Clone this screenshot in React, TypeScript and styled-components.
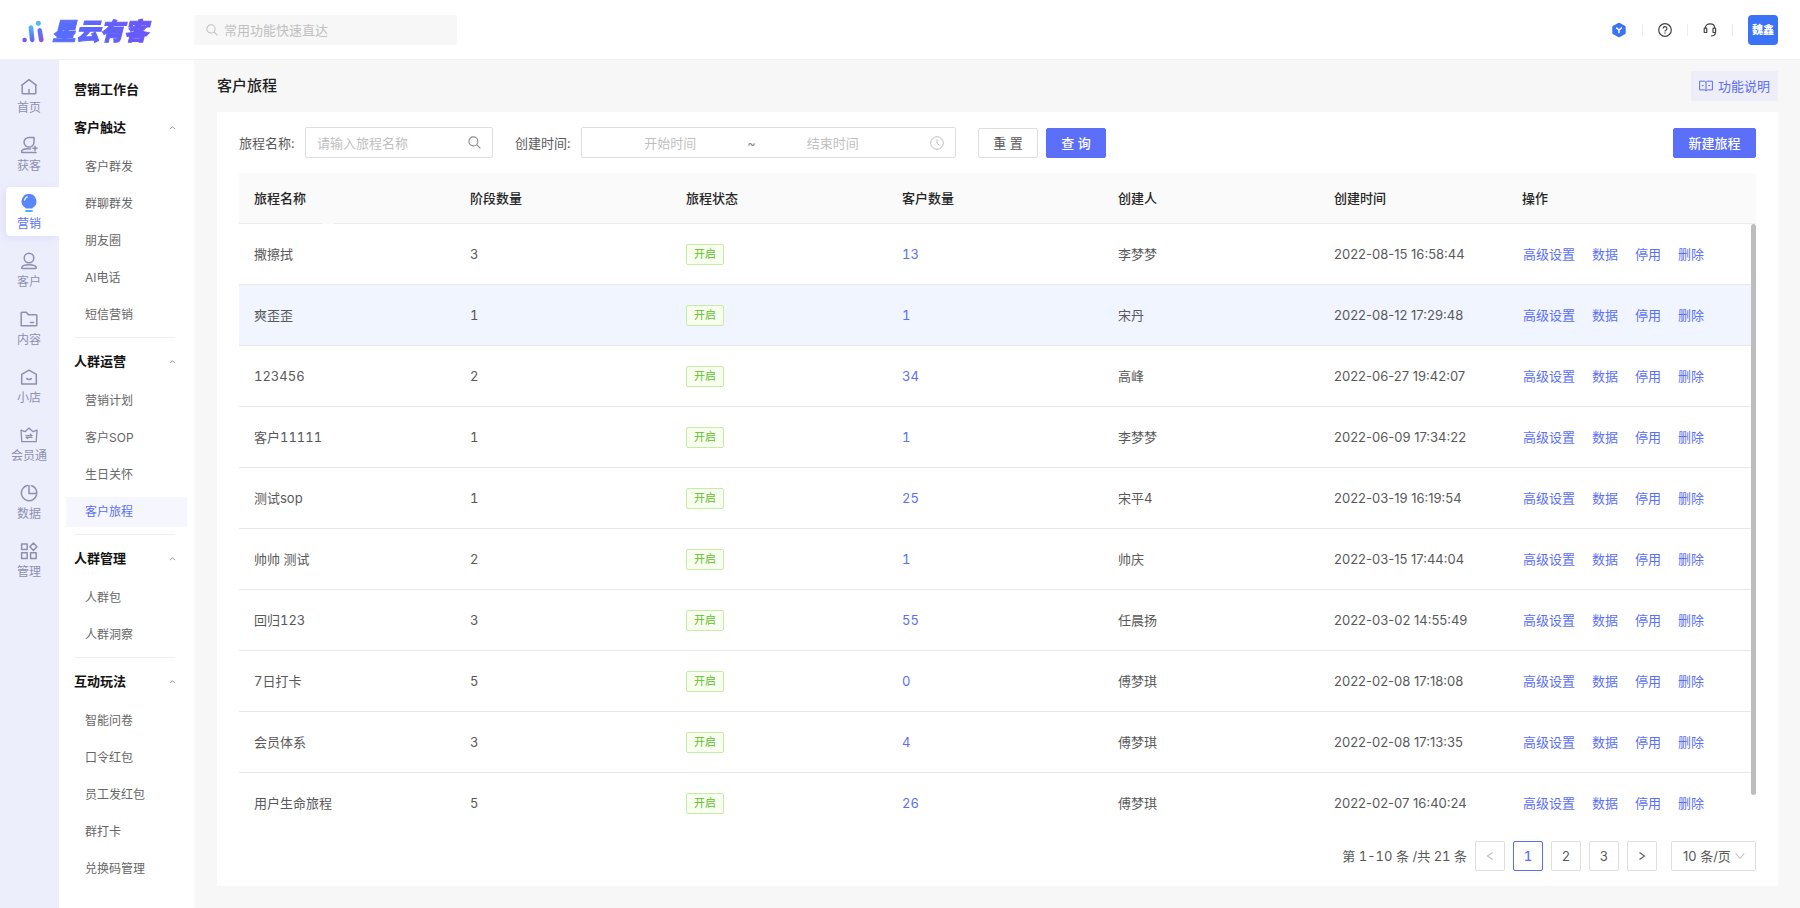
import React from 'react';
import styled, { createGlobalStyle } from 'styled-components';

const GlobalStyle = createGlobalStyle`
  *, *::before, *::after { box-sizing: border-box; }
  body {
    margin: 0;
    background: #f7f7f7;
    color: #595959;
    font: 13px/20px Inter, "Noto Sans CJK SC", sans-serif;
    font-feature-settings: "tnum";
  }
  button, input, select { font: inherit; color: inherit; margin: 0; }
  button { cursor: pointer; }
  a { color: inherit; text-decoration: none; }
  ul { list-style: none; margin: 0; padding: 0; }
  h1, h2 { margin: 0; }
  svg { display: block; flex: none; }
`;

const BRAND = '#5b6ff8';

/* ---------- shell ---------- */

const Page = styled.div`
  display: flex;
  flex-direction: column;
  min-height: 100vh;
`;

const Header = styled.header`
  display: flex;
  align-items: center;
  height: 60px;
  padding-right: 22px;
  background: #fff;
  border-bottom: 1px solid #f2f2f2;
`;

const Brand = styled.a`
  display: flex;
  align-items: center;
  gap: 7px;
  width: 194px;
  padding: 4px 0 0 21px;
`;

const BrandName = styled.span`
  padding-right: 4px;
  font-size: 24px;
  line-height: 32px;
  font-weight: 900;
  font-style: italic;
  color: transparent;
  -webkit-text-stroke: 1px transparent;
  background: linear-gradient(90deg, #5570ff, #6a55f8);
  background-clip: text;
`;

const QuickSearch = styled.label`
  display: flex;
  align-items: center;
  gap: 6px;
  width: 263px;
  height: 30px;
  padding: 0 12px;
  border-radius: 2px;
  background: #f7f7f7;
  color: #bfbfbf;
`;

const BareInput = styled.input<{ $center?: boolean }>`
  flex: 1;
  min-width: 0;
  padding: 0;
  border: 0;
  outline: 0;
  background: transparent;
  text-align: ${(p) => (p.$center ? 'center' : 'left')};
  &::placeholder { color: #bfbfbf; opacity: 1; }
`;

const HeaderTools = styled.div`
  display: flex;
  align-items: center;
  gap: 15px;
  margin-left: auto;
`;

const ToolButton = styled.button`
  display: flex;
  padding: 0;
  border: 0;
  background: none;
  color: #434343;
`;

const ToolDivider = styled.span`
  width: 1px;
  height: 12px;
  background: #ececec;
`;

const Avatar = styled.button`
  width: 30px;
  height: 30px;
  padding: 0;
  border: 0;
  border-radius: 4px;
  background: #3b72f6;
  color: #fff;
  font-size: 11px;
  font-weight: 900;
`;

const Body = styled.div`
  display: flex;
  flex: 1;
`;

/* ---------- icon rail ---------- */

const Rail = styled.nav`
  display: flex;
  flex-direction: column;
  gap: 9px;
  width: 59px;
  padding: 11px 0 0 6px;
  background: #edeefc;
`;

const RailItem = styled.a<{ $active?: boolean }>`
  display: flex;
  flex-direction: column;
  align-items: center;
  gap: 4px;
  height: 49px;
  padding: 7px 7px 0 0;
  border-radius: 4px 0 0 4px;
  font-size: 12px;
  line-height: 16px;
  white-space: nowrap;
  color: ${(p) => (p.$active ? BRAND : '#8d8fb0')};
  background: ${(p) => (p.$active ? '#fff' : 'transparent')};
  box-shadow: ${(p) => (p.$active ? '-2px 2px 8px rgba(91, 111, 248, 0.12)' : 'none')};
`;

/* ---------- sub menu ---------- */

const Menu = styled.nav`
  width: 135px;
  padding: 14px 7px 22px;
  background: #fff;
`;

const MenuHome = styled.a`
  display: block;
  margin-bottom: 8px;
  padding-left: 8px;
  line-height: 30px;
  font-weight: 700;
  color: #141414;
`;

const MenuGroup = styled.section`
  & + &::before {
    content: "";
    display: block;
    height: 1px;
    margin: 7px 12px 8px 8px;
    background: #f0f0f0;
  }
`;

const MenuHeading = styled.button`
  display: flex;
  align-items: center;
  justify-content: space-between;
  width: 100%;
  height: 30px;
  margin-bottom: 10px;
  padding: 0 10px 0 8px;
  border: 0;
  background: none;
  font-weight: 700;
  color: #141414;
  & > svg { color: #999; }
`;

const MenuList = styled.ul`
  display: flex;
  flex-direction: column;
  gap: 7px;
`;

const MenuLink = styled.a<{ $active?: boolean }>`
  display: block;
  padding-left: 19px;
  border-radius: 2px;
  font-size: 12px;
  line-height: 30px;
  color: ${(p) => (p.$active ? BRAND : '#666')};
  background: ${(p) => (p.$active ? '#f5f6fe' : 'transparent')};
`;

/* ---------- content ---------- */

const Content = styled.main`
  display: flex;
  flex: 1;
  flex-direction: column;
  min-width: 0;
  padding: 11px 22px 22px 23px;
`;

const TitleBar = styled.div`
  display: flex;
  align-items: center;
  justify-content: space-between;
  margin-bottom: 11px;
`;

const Title = styled.h1`
  font-size: 15px;
  line-height: 30px;
  font-weight: 500;
  color: #1f1f1f;
`;

const GuideLink = styled.a`
  display: flex;
  align-items: center;
  gap: 5px;
  height: 30px;
  padding: 0 8px;
  background: #eeeef8;
  color: ${BRAND};
`;

const Card = styled.section`
  flex: 1;
  padding: 15px 22px;
  background: #fff;
`;

const Filters = styled.form`
  display: flex;
  align-items: center;
  margin-bottom: 15px;
`;

const Field = styled.div`
  display: flex;
  align-items: center;
  gap: 7px;
  margin-right: 22px;
`;

const FieldLabel = styled.label`
  width: 59px;
  white-space: nowrap;
`;

const InputBox = styled.div<{ $width: number }>`
  display: flex;
  align-items: center;
  width: ${(p) => p.$width}px;
  height: 31px;
  padding: 0 11px;
  border: 1px solid #dedede;
  border-radius: 2px;
  color: #8c8c8c;
`;

const RangeIcon = styled.span`
  margin-left: 20px;
`;

const Button = styled.button<{ $primary?: boolean; $wide?: boolean }>`
  height: 30px;
  padding: 0 14px;
  min-width: ${(p) => (p.$wide ? 83 : 60)}px;
  border: 1px solid ${(p) => (p.$primary ? BRAND : '#dedede')};
  border-radius: 2px;
  background: ${(p) => (p.$primary ? BRAND : '#fff')};
  color: ${(p) => (p.$primary ? '#fff' : '#595959')};
  font-weight: ${(p) => (p.$primary ? 500 : 400)};
  line-height: 28px;
`;

const FilterActions = styled.div`
  display: flex;
  flex: 1;
  gap: 8px;
  & > :last-child { margin-left: auto; }
`;

/* ---------- table ---------- */

const TableWrap = styled.div`
  position: relative;
`;

const ScrollThumb = styled.div`
  position: absolute;
  top: 51px;
  right: 0;
  bottom: 39px;
  width: 5px;
  border-radius: 3px;
  background: #bdbdbd;
`;

const Table = styled.table`
  width: 100%;
  table-layout: fixed;
  border-collapse: separate;
  border-spacing: 0;
`;

const Col = styled.col<{ $width?: number }>`
  width: ${(p) => (p.$width ? `${p.$width}px` : 'auto')};
`;

const Th = styled.th`
  position: relative;
  height: 51px;
  padding: 0 15px;
  border-bottom: 1px solid #ebebeb;
  background: #fafafa;
  text-align: left;
  font-weight: 500;
  color: #262626;

  /* notch in the rule under the first column title */
  &:first-child::after {
    content: "";
    position: absolute;
    left: 83px;
    bottom: -1px;
    width: 12px;
    height: 1px;
    background: #fafafa;
  }
`;

const Td = styled.td`
  height: 61px;
  padding: 0 15px;
  border-bottom: 1px solid #e8e8e8;
`;

const Stamp = styled.time`
  font-feature-settings: normal;
`;

const Row = styled.tr<{ $hover?: boolean }>`
  background: ${(p) => (p.$hover ? '#f0f5ff' : '#fff')};
  &:last-child > td { border-bottom-color: transparent; }
`;

const Tag = styled.span`
  display: inline-block;
  padding: 0 7px;
  border: 1px solid #c5eda5;
  border-radius: 2px;
  background: #f8ffef;
  color: #5cbf2a;
  font-size: 11px;
  line-height: 19px;
  vertical-align: middle;
`;

const Link = styled.a`
  color: ${BRAND};
`;

const RowActions = styled.div`
  display: flex;
  gap: 17px;
  padding-left: 1px;
  white-space: nowrap;
`;

/* ---------- pagination ---------- */

const Pagination = styled.nav`
  display: flex;
  align-items: center;
  justify-content: flex-end;
  gap: 8px;
  margin-top: 7px;
`;

const PageButton = styled.button<{ $current?: boolean }>`
  display: flex;
  align-items: center;
  justify-content: center;
  width: 30px;
  height: 30px;
  padding: 0;
  border: 1px solid ${(p) => (p.$current ? BRAND : '#dedede')};
  border-radius: 2px;
  background: #fff;
  color: ${(p) => (p.$current ? BRAND : '#595959')};
  font-weight: ${(p) => (p.$current ? 500 : 400)};
  &:disabled { color: #bfbfbf; }
`;

const SizeBox = styled.div`
  position: relative;
  margin-left: 6px;
  color: #bfbfbf;
  & > svg {
    position: absolute;
    top: 10px;
    right: 11px;
    pointer-events: none;
  }
`;

const SizeSelect = styled.select`
  appearance: none;
  display: block;
  width: 85px;
  height: 30px;
  padding: 0 0 0 11px;
  border: 1px solid #dedede;
  border-radius: 2px;
  background: #fff;
  color: #595959;
  font-feature-settings: normal;
`;

/* ---------- icons ---------- */

const LogoMark = () => (
  <svg width="24" height="24" viewBox="0 0 24 24" aria-hidden="true">
    <defs>
      <linearGradient id="barA" x1="0" y1="0" x2="0" y2="1">
        <stop offset="0" stopColor="#55bdf6" />
        <stop offset="1" stopColor="#5b5ff2" />
      </linearGradient>
      <linearGradient id="barB" x1="0" y1="0" x2="0" y2="1">
        <stop offset="0" stopColor="#5b7df6" />
        <stop offset="1" stopColor="#8e4fe6" />
      </linearGradient>
    </defs>
    <circle cx="3.6" cy="20" r="2.3" fill="#7459ea" />
    <path d="M7.600 7.600a2.300 2.300 0 0 1 4.600-.3l1.300 12.300a2.300 2.300 0 0 1-4.600.5z" fill="url(#barA)" />
    <circle cx="17.300" cy="3.200" r="2.500" fill="#4fb9f5" />
    <path d="M16.400 10.200a2.300 2.300 0 0 1 4.500-.5l1.700 9.900a2.300 2.300 0 0 1-4.600.7z" fill="url(#barB)" />
  </svg>
);

const SearchIcon = ({ size = 13 }: { size?: number }) => (
  <svg width={size} height={size} viewBox="0 0 14 14" fill="none" stroke="currentColor" strokeWidth="1.2" aria-hidden="true">
    <circle cx="5.8" cy="5.8" r="4.8" />
    <path d="M9.3 9.3l4 4" />
  </svg>
);

const ClockIcon = () => (
  <svg width="14" height="14" viewBox="0 0 14 14" fill="none" stroke="#bfbfbf" aria-hidden="true">
    <circle cx="7" cy="7" r="6.3" />
    <path d="M7 3.2v4.2l2.4 1.8" />
  </svg>
);

const Chevron = ({ d, size = 10 }: { d: string; size?: number }) => (
  <svg width={size} height={size} viewBox="0 0 10 10" fill="none" stroke="currentColor" strokeWidth="1.1" aria-hidden="true">
    <path d={d} />
  </svg>
);

const HexIcon = () => (
  <svg width="16" height="16" viewBox="0 0 16 16" aria-hidden="true">
    <path d="M7.2.9a1.6 1.6 0 0 1 1.6 0l5 2.8a1.6 1.6 0 0 1 .9 1.4v5.8a1.6 1.6 0 0 1-.9 1.4l-5 2.8a1.6 1.6 0 0 1-1.6 0l-5-2.8a1.6 1.6 0 0 1-.9-1.4V5.100a1.6 1.600 0 0 1 .9-1.4z" fill="#3b72f6" />
    <path d="M5.200 5.600L8 8l2.800-2.400M8 8v3.200" fill="none" stroke="#fff" strokeWidth="1.400" />
  </svg>
);

const HelpIcon = () => (
  <svg width="14" height="14" viewBox="0 0 14 14" fill="none" stroke="currentColor" strokeWidth="1.2" aria-hidden="true">
    <circle cx="7" cy="7" r="6.3" />
    <path d="M5.100 5.500a1.900 1.900 0 1 1 2.800 1.700c-.6.3-.9.600-.9 1.200" />
    <path d="M7 9.500v1.300" />
  </svg>
);

const HeadsetIcon = () => (
  <svg width="14" height="14" viewBox="0 0 14 14" fill="none" stroke="currentColor" strokeWidth="1.2" aria-hidden="true">
    <path d="M2.400 5.200V4.600C2.400 2.300 4.400.9 7 .9s4.600 1.400 4.600 3.700v.6" />
    <rect x="1.200" y="5.200" width="2.600" height="4.300" rx=".6" />
    <rect x="10" y="5.200" width="2.600" height="4.300" rx=".6" />
    <path d="M12.400 9.400c0 2.200-1.500 3.500-4.600 3.600" />
  </svg>
);

const BookIcon = () => (
  <svg width="14" height="12" viewBox="0 0 14 12" fill="none" stroke="currentColor" aria-hidden="true">
    <path d="M.6 1.200h4.600c1 0 1.800.7 1.800 1.500 0-.8.8-1.500 1.800-1.500h4.600v8.700H8.800c-1 0-1.800.4-1.800 1.200 0-.8-.8-1.200-1.800-1.200H.6zM7 2.700v8.400M2.800 5.600h1.800M9.400 5.600h1.800" />
  </svg>
);

const RailSvg = ({ children }: { children: React.ReactNode }) => (
  <svg width="18" height="18" viewBox="0 0 18 18" fill="none" stroke="currentColor" strokeWidth="1.5" strokeLinejoin="round" strokeLinecap="round" aria-hidden="true">
    {children}
  </svg>
);

const railItems: { label: string; active?: boolean; icon: React.ReactNode }[] = [
  { label: '首页', icon: <path d="M1.600 7.300L9 1.600l7.400 5.700M2.200 7v7.900c0 .5.400.9.900.9h11.800c.5 0 .9-.4.900-.9V7M9 11.500v4" /> },
  {
    label: '获客',
    icon: (
      <>
        <path d="M9 1.500h5v4.800a5 4.800 0 1 1-5-4.800z" />
        <path d="M10.500 12.900c-3.500-.3-7.500-.1-8.800 2-.5.800 0 1.700.8 1.700h13.600M15 10.200v4.200M12.900 12.300h4.200" />
      </>
    ),
  },
  {
    label: '营销',
    active: true,
    icon: (
      <>
        <path d="M9 0a7.300 7.300 0 0 1 4.100 13.400c-.5.300-.8.700-.8 1.200H5.700c0-.5-.3-.9-.8-1.200A7.300 7.300 0 0 1 9 0z" fill="#5a86fb" stroke="none" />
        <path d="M4.600 6.200a4.400 4.400 0 0 1 2.600-3.300" stroke="#fff" strokeWidth="1.200" />
        <path d="M6 17h6" stroke="#4fb0fa" strokeWidth="1.800" />
      </>
    ),
  },
  {
    label: '客户',
    icon: (
      <>
        <circle cx="9" cy="6" r="4.800" />
        <path d="M9 12.800c-3.600 0-6.300.5-7.200 2.400-.3.700.1 1.400.8 1.400h12.800c.7 0 1.100-.7.800-1.400-.9-1.900-3.600-2.400-7.200-2.400z" />
      </>
    ),
  },
  { label: '内容', icon: <path d="M1.200 15.800V3c0-.5.300-.8.800-.8h4.400l2 2.600H16c.5 0 .8.300.8.800v9.400c0 .5-.3.800-.8.800zM10.500 12.600h3" /> },
  { label: '小店', icon: <path d="M1.700 6.300L9 2.100l7.300 4.200v9.600H1.700zM6.700 10.600c1.200 1.200 3.400 1.200 4.600 0" /> },
  { label: '会员通', icon: <path d="M1 4.100l4 1.600L9 2.100l4 3.600 4-1.600-.8 11.600H1.800zM6 9.600h6l-1.700-1.400M12 11.300H6l1.700 1.300" strokeWidth="1.300" /> },
  { label: '数据', icon: <path d="M7.400 1.500A7.700 7.700 0 1 0 16.500 11M9 9.400V1.500M11.500 1.700a7.400 7.400 0 0 1 5 5.200c.2.700.2 1.400.2 2.500H9" /> },
  {
    label: '管理',
    icon: (
      <>
        <rect x="1.600" y="2" width="5.600" height="5.600" />
        <rect x="1.600" y="10.800" width="5.600" height="5.600" />
        <rect x="10.600" y="10.800" width="5.600" height="5.600" />
        <path d="M13.400 1l3.500 3.700-3.500 3.700-3.500-3.700z" />
      </>
    ),
  },
];

/* ---------- data ---------- */

const menuGroups = [
  { title: '客户触达', items: ['客户群发', '群聊群发', '朋友圈', 'AI电话', '短信营销'] },
  { title: '人群运营', items: ['营销计划', '客户SOP', '生日关怀', '客户旅程'] },
  { title: '人群管理', items: ['人群包', '人群洞察'] },
  { title: '互动玩法', items: ['智能问卷', '口令红包', '员工发红包', '群打卡', '兑换码管理'] },
];

const columns = ['旅程名称', '阶段数量', '旅程状态', '客户数量', '创建人', '创建时间', '操作'];

const journeys = [
  { name: '撒擦拭', stages: 3, customers: 13, creator: '李梦梦', created: '2022-08-15 16:58:44' },
  { name: '爽歪歪', stages: 1, customers: 1, creator: '宋丹', created: '2022-08-12 17:29:48', hover: true },
  { name: '123456', stages: 2, customers: 34, creator: '高峰', created: '2022-06-27 19:42:07' },
  { name: '客户11111', stages: 1, customers: 1, creator: '李梦梦', created: '2022-06-09 17:34:22' },
  { name: '测试sop', stages: 1, customers: 25, creator: '宋平4', created: '2022-03-19 16:19:54' },
  { name: '帅帅 测试', stages: 2, customers: 1, creator: '帅庆', created: '2022-03-15 17:44:04' },
  { name: '回归123', stages: 3, customers: 55, creator: '任晨扬', created: '2022-03-02 14:55:49' },
  { name: '7日打卡', stages: 5, customers: 0, creator: '傅梦琪', created: '2022-02-08 17:18:08' },
  { name: '会员体系', stages: 3, customers: 4, creator: '傅梦琪', created: '2022-02-08 17:13:35' },
  { name: '用户生命旅程', stages: 5, customers: 26, creator: '傅梦琪', created: '2022-02-07 16:40:24' },
];

const rowActions = ['高级设置', '数据', '停用', '删除'];

export default function App() {
  return (
    <Page>
      <GlobalStyle />
      <Header>
        <Brand href="#">
          <LogoMark />
          <BrandName>星云有客</BrandName>
        </Brand>
        <QuickSearch>
          <SearchIcon size={12} />
          <BareInput type="text" placeholder="常用功能快速直达" aria-label="常用功能快速直达" />
        </QuickSearch>
        <HeaderTools>
          <ToolButton type="button" aria-label="应用"><HexIcon /></ToolButton>
          <ToolDivider />
          <ToolButton type="button" aria-label="帮助"><HelpIcon /></ToolButton>
          <ToolDivider />
          <ToolButton type="button" aria-label="客服"><HeadsetIcon /></ToolButton>
          <ToolDivider />
          <Avatar type="button">魏鑫</Avatar>
        </HeaderTools>
      </Header>

      <Body>
        <Rail aria-label="主导航">
          {railItems.map((item) => (
            <RailItem key={item.label} href="#" $active={item.active}>
              <RailSvg>{item.icon}</RailSvg>
              {item.label}
            </RailItem>
          ))}
        </Rail>

        <Menu aria-label="营销菜单">
          <MenuHome href="#">营销工作台</MenuHome>
          {menuGroups.map((group) => (
            <MenuGroup key={group.title}>
              <MenuHeading type="button" aria-expanded="true">
                {group.title}
                <Chevron d="M2.200 6.800L5 4l2.800 2.800" size={9} />
              </MenuHeading>
              <MenuList>
                {group.items.map((item) => (
                  <li key={item}>
                    <MenuLink href="#" $active={item === '客户旅程'}>{item}</MenuLink>
                  </li>
                ))}
              </MenuList>
            </MenuGroup>
          ))}
        </Menu>

        <Content>
          <TitleBar>
            <Title>客户旅程</Title>
            <GuideLink href="#"><BookIcon />功能说明</GuideLink>
          </TitleBar>

          <Card>
            <Filters>
              <Field>
                <FieldLabel htmlFor="journey-name">旅程名称:</FieldLabel>
                <InputBox $width={188}>
                  <BareInput id="journey-name" type="text" placeholder="请输入旅程名称" />
                  <SearchIcon />
                </InputBox>
              </Field>
              <Field>
                <FieldLabel htmlFor="created-from">创建时间:</FieldLabel>
                <InputBox $width={375}>
                  <BareInput id="created-from" type="text" placeholder="开始时间" $center />
                  ~
                  <BareInput type="text" placeholder="结束时间" aria-label="结束时间" $center />
                  <RangeIcon><ClockIcon /></RangeIcon>
                </InputBox>
              </Field>
              <FilterActions>
                <Button type="reset">重 置</Button>
                <Button type="button" $primary>查 询</Button>
                <Button type="button" $primary $wide>新建旅程</Button>
              </FilterActions>
            </Filters>

            <TableWrap>
              <Table>
                <colgroup>
                  <Col />
                  <Col />
                  <Col />
                  <Col />
                  <Col />
                  <Col $width={188} />
                  <Col $width={249} />
                </colgroup>
                <thead>
                  <tr>
                    {columns.map((c) => <Th key={c} scope="col">{c}</Th>)}
                  </tr>
                </thead>
                <tbody>
                  {journeys.map((j) => (
                    <Row key={j.created} $hover={j.hover}>
                      <Td>{j.name}</Td>
                      <Td>{j.stages}</Td>
                      <Td><Tag>开启</Tag></Td>
                      <Td><Link href="#">{j.customers}</Link></Td>
                      <Td>{j.creator}</Td>
                      <Td><Stamp>{j.created}</Stamp></Td>
                      <Td>
                        <RowActions>
                          {rowActions.map((a) => <Link key={a} href="#">{a}</Link>)}
                        </RowActions>
                      </Td>
                    </Row>
                  ))}
                </tbody>
              </Table>
              <ScrollThumb />
            </TableWrap>

            <Pagination aria-label="分页">
              <span>第 1-10 条 /共 21 条</span>
              <PageButton type="button" disabled aria-label="上一页"><Chevron d="M7.500 1.500L2.500 5l5 3.500" /></PageButton>
              <PageButton type="button" $current aria-current="page">1</PageButton>
              <PageButton type="button">2</PageButton>
              <PageButton type="button">3</PageButton>
              <PageButton type="button" aria-label="下一页"><Chevron d="M2.500 1.500l5 3.500-5 3.500" /></PageButton>
              <SizeBox>
                <SizeSelect aria-label="每页条数" defaultValue="10">
                  <option value="10">10 条/页</option>
                  <option value="20">20 条/页</option>
                  <option value="50">50 条/页</option>
                </SizeSelect>
                <Chevron d="M.8 2.500L5 7.500l4.200-5" />
              </SizeBox>
            </Pagination>
          </Card>
        </Content>
      </Body>
    </Page>
  );
}
